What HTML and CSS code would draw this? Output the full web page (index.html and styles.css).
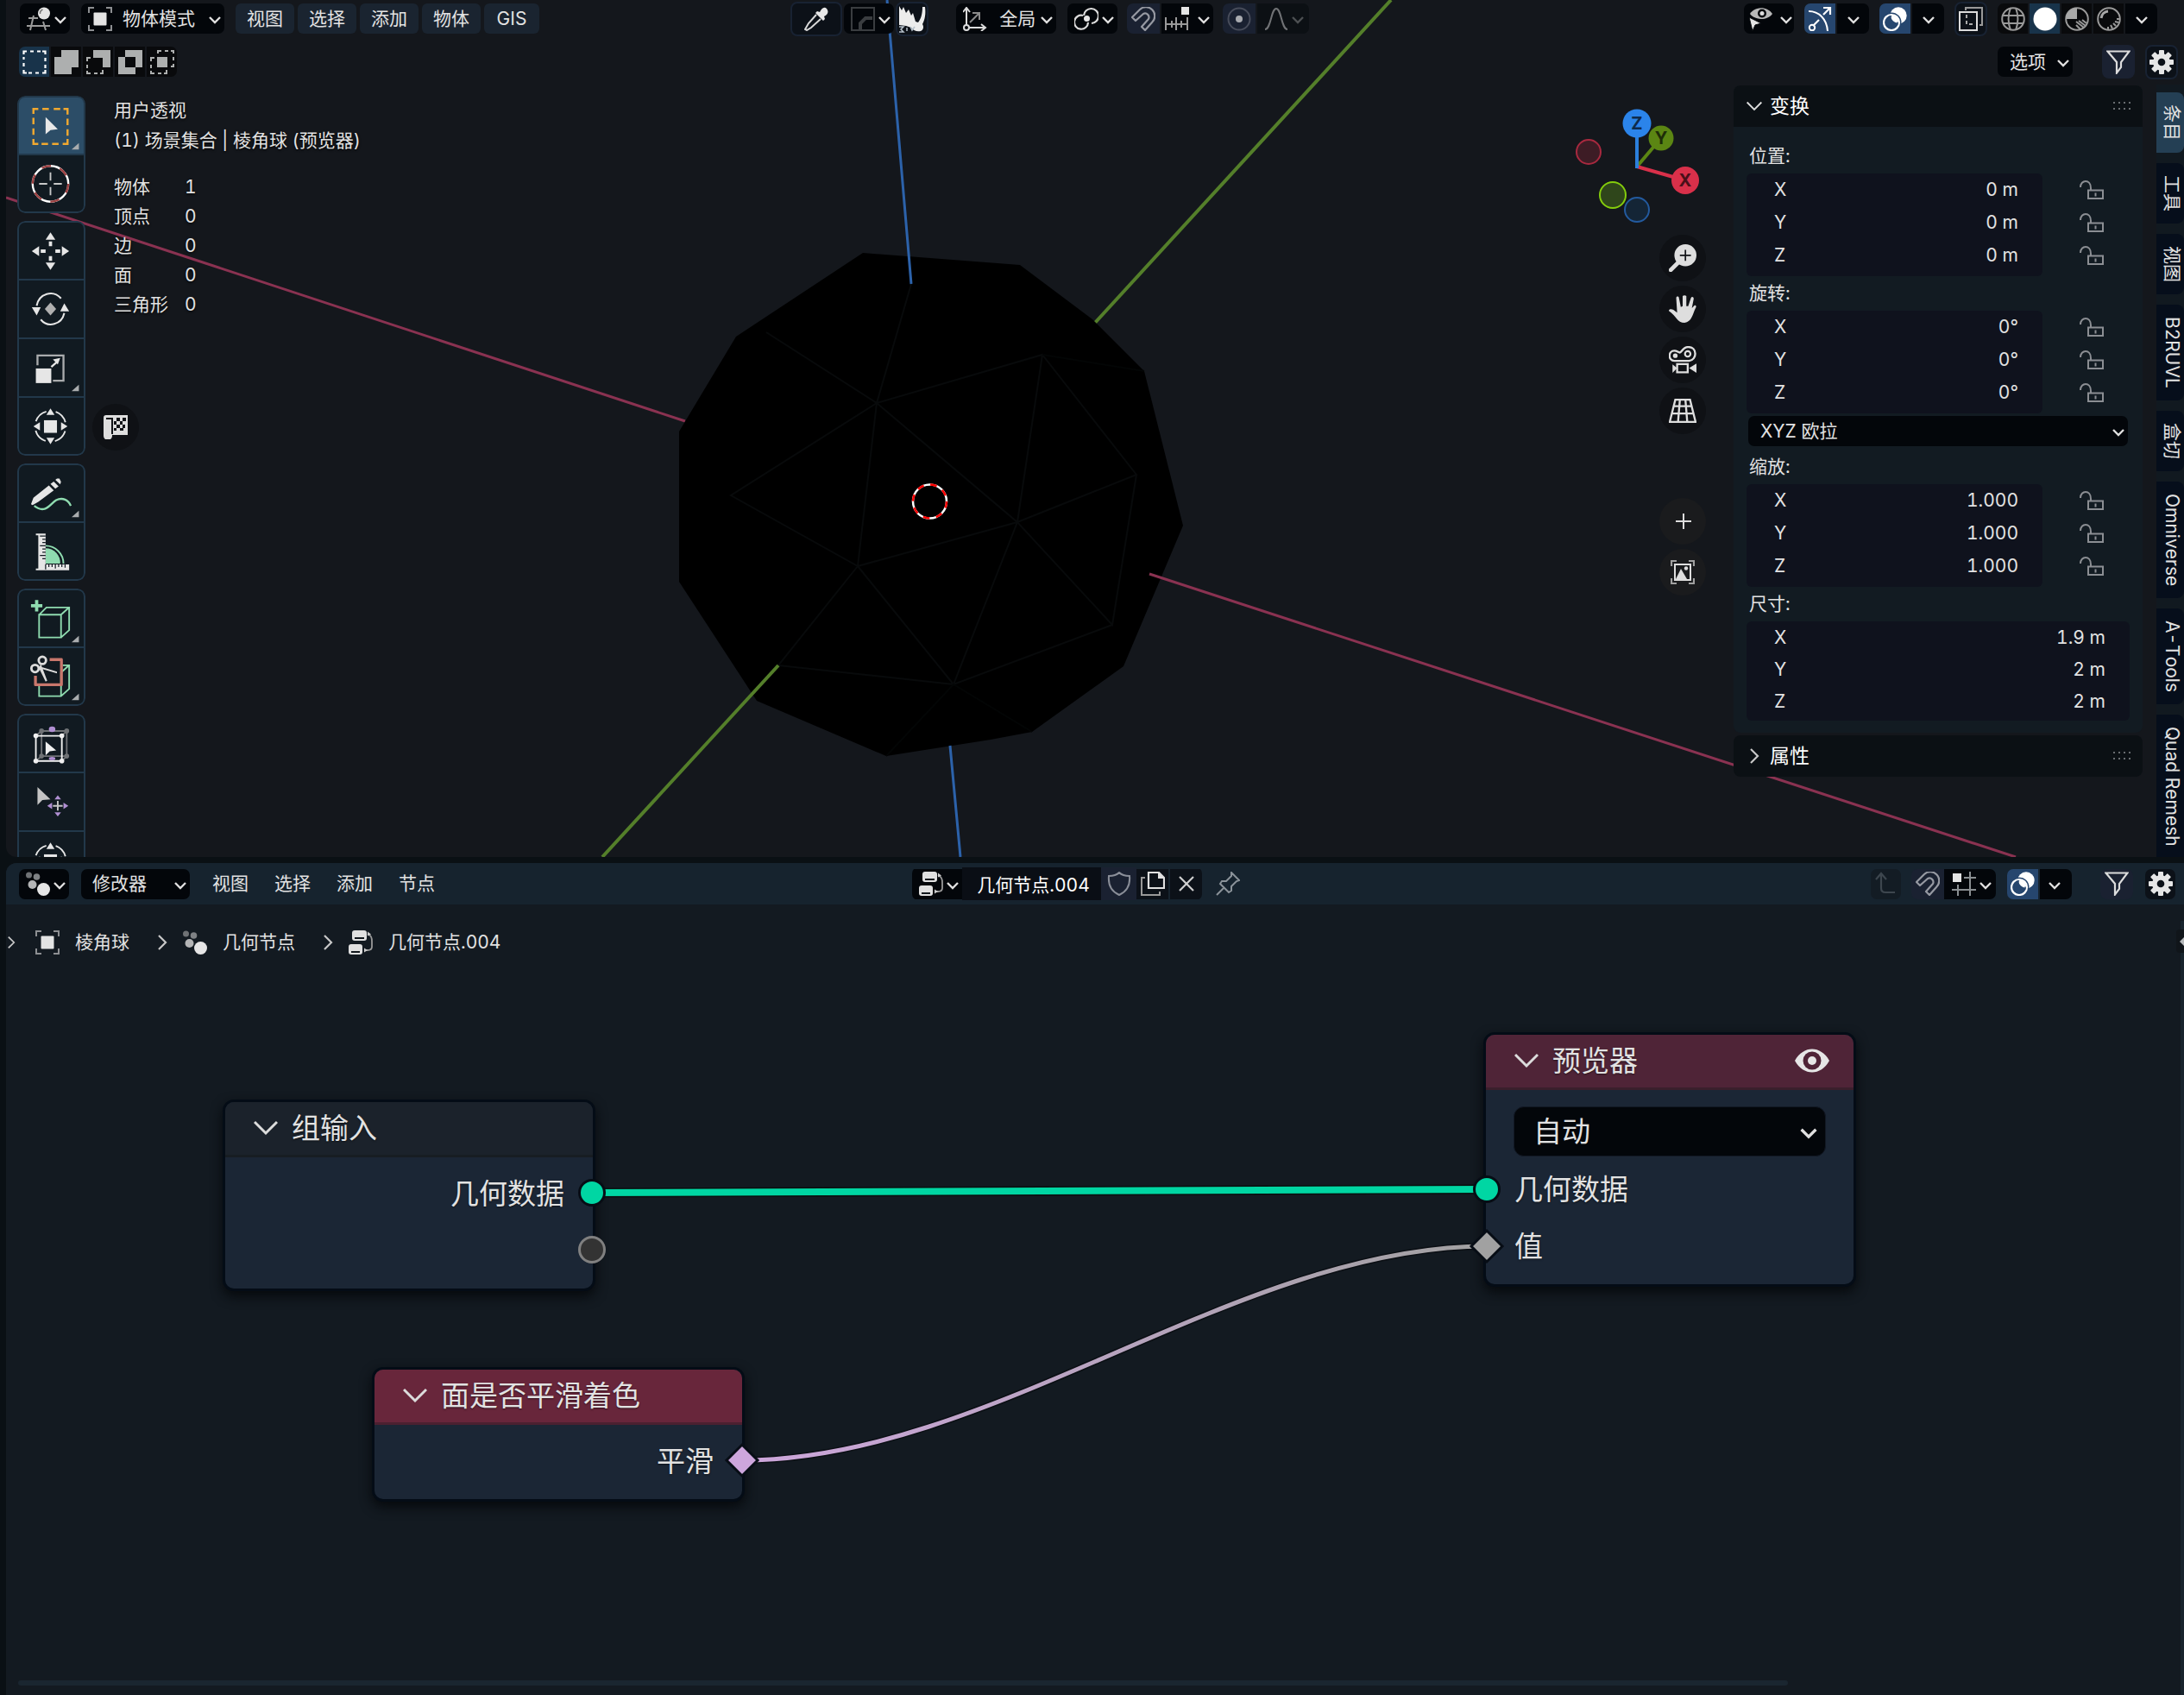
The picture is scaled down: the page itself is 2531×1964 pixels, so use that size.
FILE: index.html
```html
<!DOCTYPE html>
<html lang="zh-CN">
<head>
<meta charset="utf-8">
<meta name="viewport" content="width=device-width, initial-scale=1">
<title>几何节点</title>
<link rel="stylesheet" href="styles.css">
</head>
<body>

<svg class="defs" aria-hidden="true">
  <symbol id="chev" viewBox="0 0 14 10"><path d="M1 2l6 6 6-6" fill="none" stroke="#e0e0e0" stroke-width="2.4"/></symbol>
  <symbol id="chev-thin" viewBox="0 0 28 18"><path d="M1 2l13 13L27 2" fill="none" stroke="#dcdcdc" stroke-width="3"/></symbol>
  <symbol id="chev-right" viewBox="0 0 12 20"><path d="M2 2l8 8-8 8" fill="none" stroke="#c8c8c8" stroke-width="2.2"/></symbol>
  <symbol id="i-view3d" viewBox="0 0 28 28"><g fill="none" stroke="#9a9a9a" stroke-width="2"><path d="M2 13h11M0 22h27M8 10L4 27M19 17l3 10"/></g><circle cx="20" cy="7.500" r="7" fill="#e4e4e4"/><path d="M15.500 8a5 5 0 0 1 3-5" fill="none" stroke="#777" stroke-width="1.500"/></symbol>
  <symbol id="i-object" viewBox="0 0 28 28"><path d="M1 7V1h6M21 1h6v6M27 21v6h-6M7 27H1v-6" fill="none" stroke="#8d8f92" stroke-width="2"/><rect x="6.500" y="6.500" width="15" height="15" rx="1" fill="#e4e4e4"/></symbol>
  <symbol id="i-geonodes" viewBox="0 0 28 28"><circle cx="3.500" cy="4" r="3.500" fill="#6f7275"/><circle cx="12.500" cy="6" r="3.800" fill="#7f8285"/><circle cx="7.500" cy="15" r="5" fill="#b4b5b6"/><circle cx="20.500" cy="20.500" r="7.500" fill="#e6e6e6"/></symbol>
  <symbol id="i-tree" viewBox="0 0 28 28"><rect x="4" y="0" width="17" height="12" rx="3" fill="#e0e0e0"/><rect x="0" y="16" width="16" height="12" rx="3" fill="#e0e0e0"/><path d="M7 9h11M3 25h10" stroke="#11171c" stroke-width="2"/><path d="M22 4c4 2 5 4 5 9v6c0 3-2 4-5 4h-3" fill="none" stroke="#999" stroke-width="1.800"/><path d="M22 1.500v5l4-2zM18 20.500v5l4-2.500z" fill="#ccc"/></symbol>
  <symbol id="i-magnet" viewBox="0 0 28 28"><path d="M1 12L10 3a10 10 0 0 1 14 15l-8 9-4-4 8-9a4.500 4.500 0 0 0-6-6l-9 8z" fill="none" stroke="currentColor" stroke-width="2.200" stroke-linejoin="round"/></symbol>
  <symbol id="i-overlay" viewBox="0 0 28 28"><circle cx="18" cy="10" r="9.700" fill="#fff"/><circle cx="10" cy="18" r="9" fill="none" stroke="#26466e" stroke-width="5"/><circle cx="10" cy="18" r="9" fill="none" stroke="#fff" stroke-width="2.200"/><path d="M10.500 9.500a9 9 0 0 1 8 8A9.700 9.700 0 0 1 9 13z" fill="#fff"/><path d="M8.300 10.500A9.700 9.700 0 0 0 17.500 19.700" fill="none" stroke="#26466e" stroke-width="2"/></symbol>
  <symbol id="i-filter" viewBox="0 0 28 28"><path d="M1.500 1.500h25L17 14v6l-5 6.500V14z" fill="none" stroke="#dcdcdc" stroke-width="2.200"/></symbol>
  <symbol id="i-gear" viewBox="0 0 28 28"><g fill="#e6e6e6"><rect x="11" y="0" width="6" height="28" rx="1"/><rect x="0" y="11" width="28" height="6" rx="1"/><rect x="11" y="0" width="6" height="28" rx="1" transform="rotate(45 14 14)"/><rect x="11" y="0" width="6" height="28" rx="1" transform="rotate(-45 14 14)"/><circle cx="14" cy="14" r="10"/></g><circle cx="14" cy="14" r="4.300" fill="#0c1118"/></symbol>
  <symbol id="i-lock" viewBox="0 0 28 22"><path d="M1 8c0-9 12-10 12 1v3" fill="none" stroke="#8b8e93" stroke-width="2"/><path d="M10 11.500h17V21H10zM18.500 14.500v4" fill="none" stroke="#8b8e93" stroke-width="2"/></symbol>
  <symbol id="i-grip" viewBox="0 0 21 10"><path d="M1 1h2M7 1h2M13 1h2M19 1h2M1 8h2M7 8h2M13 8h2M19 8h2" stroke="#686c70" stroke-width="2"/></symbol>
  <symbol id="t-corner" viewBox="-38 -34 76 68"><path d="M35 21v8h-9z" fill="#a9acae"/></symbol>
  <symbol id="t-transform" viewBox="-38 -34 76 68"><circle r="19" fill="none" stroke="#e6e6e6" stroke-width="2" stroke-dasharray="18 11.850" stroke-dashoffset="-6"/><rect x="-8" y="-7.500" width="16" height="15.500" fill="#e6e6e6"/><path d="M0-22l5 8h-10zM0 22l5-8h-10zM-21 0l8-5v10zM21 0l-8-5v10z" fill="#e6e6e6"/></symbol>
</svg>

<main class="app">

<section class="area viewport" aria-label="3D 视图">
  <svg class="scene" viewBox="7 0 2524 993" preserveAspectRatio="xMidYMin slice" aria-hidden="true">
    <g fill="none" stroke-width="4">
      <path d="M1612 0L1269 374" stroke="#547f2a"/>
      <path d="M7 229L794 488" stroke="#8a3251" stroke-width="3"/>
    </g>
    <path d="M1000 293l182 14 84 63 60 60 45 179-69 163-106 76-48 9-121 19-150-64-90-138V500l66-110z" fill="#000"/>
    <path d="M1056 329L1016 467 1208 411 1179 605 1016 467 994 656 847 574 1016 467 888 385M994 656L1179 605 1317 550 1208 411M994 656L1105 793 1179 605 1289 724 1317 550M1289 724L1105 793 902 771 994 656" fill="none" stroke="#080a0b" stroke-width="2"/>
    <path d="M1027 876L1105 793 1196 848M1208 411L1326 430" fill="none" stroke="#030505" stroke-width="2"/>
    <g fill="none" stroke-width="3">
      <path d="M902 771L698 993" stroke="#547f2a" stroke-width="4"/>
      <path d="M1332 665L2336 993" stroke="#8a3251"/>
      <path d="M1028 0L1056 329M1101 864L1113 993" stroke="#2c62aa"/>
    </g>
    <circle cx="1077.500" cy="581" r="19.500" fill="none" stroke="#fff" stroke-width="2.500"/>
    <circle cx="1077.500" cy="581" r="19.500" fill="none" stroke="#f00" stroke-width="2.500" stroke-dasharray="7.660"/>
  </svg>

  <header class="bar top">
    <button class="drop" aria-label="编辑器类型"><svg class="ic"><use href="#i-view3d"/></svg><svg class="cv"><use href="#chev"/></svg></button>
    <span class="drop mode"><svg class="ic"><use href="#i-object"/></svg><select aria-label="模式"><option>物体模式</option></select><svg class="cv"><use href="#chev"/></svg></span>
    <nav class="menus">
      <button>视图</button><button>选择</button><button>添加</button><button>物体</button><button>GIS</button>
    </nav>
    <span class="gap-a"></span>
    <div class="set tools">
      <button class="ghost wide" aria-label="吸管"><svg class="ic" viewBox="0 0 28 28"><path d="M26 2c3 4 1 7-3 9l1 3-2 2-9-9 2-2 3 1c2-4 5-7 8-4z" fill="#e8e8e8"/><path d="M14 9L5 19l-4 7 2 1 5-3 11-10" fill="none" stroke="#d8d8d8" stroke-width="2"/></svg></button>
      <button class="drop" aria-label="衰减"><svg class="ic" viewBox="0 0 28 28"><rect x="1" y="1" width="26" height="26" fill="none" stroke="#3a3d40" stroke-width="2"/><path d="M11 26v-7l6-6h8" fill="none" stroke="#3a3d40" stroke-width="4"/></svg><svg class="cv"><use href="#chev"/></svg></button>
      <button class="ghost rhino" aria-label="插件"><svg class="rh" viewBox="0 0 32 32"><path d="M1 1l3 5 2-4 3 7 3-4 3 7 2-3 3 10 3 1c3-4 5-9 5-18h3c1 8 0 14-3 20 2 3 1 7-2 8-4 1-8 0-11-4L9 24 1 23z" fill="#ececec"/><path d="M1 25h5l-3 3 3 3H1M10 26v4M14 25l2 4 3-4" stroke="#b5c0ca" stroke-width="1.500" fill="none"/></svg></button>
    </div>
    <span class="drop orient"><svg class="ic" viewBox="0 0 28 28"><path d="M4 22V2M0 6l4-5 4 5M6 24h19M21 20l5 4-5 4" fill="none" stroke="#dcdcdc" stroke-width="2"/><path d="M8 18L18 8M11 7h8v8" fill="none" stroke="#8a8a8a" stroke-width="2"/><circle cx="4" cy="24" r="3" fill="none" stroke="#dcdcdc" stroke-width="2"/></svg><select aria-label="变换坐标系"><option>全局</option></select><svg class="cv"><use href="#chev"/></svg></span>
    <button class="drop" aria-label="轴心点"><svg class="ic" viewBox="0 0 28 28"><path d="M11 10a8.500 8.500 0 1 1 9 9" fill="none" stroke="#dcdcdc" stroke-width="2.200"/><path d="M16 18a8 8 0 1 1-6-8" fill="none" stroke="#dcdcdc" stroke-width="2.200"/><circle cx="14.500" cy="13.500" r="3.500" fill="#e8e8e8"/></svg><svg class="cv"><use href="#chev"/></svg></button>
    <div class="join snap">
      <button class="tog" aria-label="吸附"><svg class="ic"><use href="#i-magnet"/></svg></button>
      <button class="drop" aria-label="吸附选项"><svg class="ic" viewBox="0 0 28 28"><rect x="19" y="0" width="9" height="9" fill="#e4e4e4"/><path d="M1 12v15M26 12v15M1 20h25M8 16v8M13 12v15M19 16v8" fill="none" stroke="#999" stroke-width="2"/></svg><svg class="cv"><use href="#chev"/></svg></button>
    </div>
    <div class="join prop">
      <button class="tog" aria-label="衰减编辑"><svg class="ic" viewBox="0 0 28 28"><circle cx="14" cy="14" r="12.500" fill="none" stroke="#474c5a" stroke-width="2"/><circle cx="14" cy="14" r="4" fill="#a9abb0"/></svg></button>
      <button class="drop dim" aria-label="衰减类型"><svg class="ic" viewBox="0 0 28 28"><path d="M1 26c7 0 7-24 13-24s6 24 13 24" fill="none" stroke="#707275" stroke-width="2"/></svg><svg class="cv"><use href="#chev"/></svg></button>
    </div>
    <span class="gap-b"></span>
    <div class="set right">
      <button class="drop vis" aria-label="可选性"><svg class="ic" viewBox="0 0 28 28"><path d="M1 8C7-1 21-1 27 8 21 16 7 16 1 8z" fill="#b8b8b8"/><circle cx="15" cy="7.500" r="5" fill="#04070b"/><circle cx="15" cy="7.500" r="2.500" fill="#ddd"/><path d="M0 12l14 7-7 2-3 7z" fill="#e4e4e4" stroke="#04070b" stroke-width="1"/></svg><svg class="cv"><use href="#chev"/></svg></button>
      <div class="join">
        <button class="on" aria-label="Gizmo"><svg class="ic" viewBox="0 0 28 28"><path d="M1 5c12 0 21 9 22 23" fill="none" stroke="#fff" stroke-width="2"/><path d="M6 22l7-7M18 9l8-8M18 1h8v8" fill="none" stroke="#fff" stroke-width="2.200"/><circle cx="5" cy="24" r="3.200" fill="none" stroke="#fff" stroke-width="2"/></svg></button>
        <button class="drop solo" aria-label="Gizmo 选项"><svg class="cv"><use href="#chev"/></svg></button>
      </div>
      <div class="join">
        <button class="on" aria-label="叠加层"><svg class="ic"><use href="#i-overlay"/></svg></button>
        <button class="drop solo" aria-label="叠加层选项"><svg class="cv"><use href="#chev"/></svg></button>
      </div>
      <button class="ghost" aria-label="透视模式"><svg class="ic" viewBox="0 0 28 28"><rect x="1" y="6" width="20" height="21" fill="none" stroke="#dcdcdc" stroke-width="2"/><path d="M8 4V1h19v20h-3" fill="none" stroke="#999" stroke-width="2"/><path d="M9 9v11h10" fill="none" stroke="#aaa" stroke-width="2" stroke-dasharray="4 3"/></svg></button>
      <div class="join">
        <button class="sh" aria-label="线框"><svg class="ic" viewBox="0 0 28 28"><g fill="none" stroke="#999" stroke-width="2"><circle cx="14" cy="14" r="12.800"/><path d="M11 1c-3 8-3 18 0 26M17 1c3 8 3 18 0 26M2 10h24M2 19h24"/></g></svg></button>
        <button class="sh sel" aria-label="实体"><svg class="ic" viewBox="0 0 28 28"><circle cx="14" cy="14" r="13.500" fill="#fff"/></svg></button>
        <button class="sh" aria-label="材质预览"><svg class="ic" viewBox="0 0 28 28"><circle cx="14" cy="14" r="12.800" fill="none" stroke="#999" stroke-width="2"/><path d="M14 1v13H1A13 13 0 0 1 14 1z" fill="#a8a8a8"/><path d="M13 17l9 7M16 16l8 6M20 15l5 4M13 21l5 5" stroke="#999" stroke-width="2"/></svg></button>
        <button class="sh" aria-label="渲染"><svg class="ic" viewBox="0 0 28 28"><circle cx="14" cy="14" r="12.800" fill="none" stroke="#999" stroke-width="2"/><path d="M5 13a9 9 0 0 1 8-8" fill="none" stroke="#a8a8a8" stroke-width="3"/><path d="M26 14l-3 0M25 18l-4-1M22 22l-3-3M18 25l-2-4M13 26v-3" stroke="#999" stroke-width="2"/></svg></button>
        <button class="drop solo" aria-label="着色选项"><svg class="cv"><use href="#chev"/></svg></button>
      </div>
    </div>
  </header>

  <div class="bar second">
    <div class="join">
      <button class="sh sel" aria-label="设置选择"><svg class="ic" viewBox="0 0 28 28"><path d="M1.500 5v-3.500h3.500M9 1.500h4M17 1.500h4M23 1.500h3.500v3.500M26.500 9v4M26.500 17v4M26.500 23v3.500h-3.500M19 26.500h-4M11 26.500h-4M5 26.500h-3.500v-3.500M1.500 19v-4M1.500 11v-3" fill="none" stroke="#fff" stroke-width="2.200"/></svg></button>
      <button class="sh" aria-label="扩展选择"><svg class="ic" viewBox="0 0 28 28"><path d="M8 0h20v20h-8v8H0V8h8z" fill="#adafaf"/></svg></button>
      <button class="sh" aria-label="减去选择"><svg class="ic" viewBox="0 0 28 28"><path d="M8 0h20v20h-9V9H8z" fill="#adafaf"/><path d="M5 9H1v4M1 17v4M1 24v3h4M9 27h4M16 27h3v-4" fill="none" stroke="#adafaf" stroke-width="2"/></svg></button>
      <button class="sh" aria-label="反转选择"><svg class="ic" viewBox="0 0 28 28"><path d="M8 0h20v20h-8v8H0V8h8zM8 8v12h12V8z" fill="#adafaf" fill-rule="evenodd"/></svg></button>
      <button class="sh" aria-label="交集选择"><svg class="ic" viewBox="0 0 28 28"><rect x="8" y="8" width="12" height="12" fill="#adafaf"/><path d="M9 4V1h4M17 1h4M24 1h3v3M27 8v4M27 16v3h-3M5 9H1v4M1 17v4M1 24v3h4M9 27h4M16 27h3v-4" fill="none" stroke="#adafaf" stroke-width="2"/></svg></button>
    </div>
    <span class="grow"></span>
    <span class="drop opts"><select aria-label="选项"><option>选项</option></select><svg class="cv"><use href="#chev"/></svg></span>
    <button class="tog filt" aria-label="过滤"><svg class="ic"><use href="#i-filter"/></svg></button>
    <button class="ghost gear" aria-label="设置"><svg class="ic"><use href="#i-gear"/></svg></button>
  </div>

  <div class="work">
    <div class="toolbar">
      <div class="grp">
        <button class="sel" aria-label="框选"><svg viewBox="-38 -34 76 68"><path d="M-21-15v-6h6M-10-21h8M4-21h8M16-21h5v7M21-9v8M21 4v8M21 16v6h-6M10 22h-8M-3 22h-8M-15 22h-6v-6M-21 11v-8M-21-2v-8" fill="none" stroke="#f0a830" stroke-width="2.600"/><path d="M-6-11v21l6-5 9-1z" fill="#e8e8e8"/><use href="#t-corner" x="-38" y="-34" width="76" height="68"/></svg></button>
        <button aria-label="游标"><svg viewBox="-38 -34 76 68"><circle r="22" fill="none" stroke="#fff" stroke-width="2.500"/><circle r="22" fill="none" stroke="#9c3f40" stroke-width="2.500" stroke-dasharray="11.500"/><path d="M-14 0H-4M4 0h10M0-14V-4M0 4v10" stroke="#c8c8c8" stroke-width="2"/></svg></button>
      </div>
      <div class="grp">
        <button aria-label="移动"><svg viewBox="-38 -34 76 68"><path d="M0-23l6 9H-6zM0 23l6-9H-6zM-23 0l9-6V6zM23 0l-9-6V6zM-2-12h4v6h-4zM-2 6h4v6h-4zM-12-2h6v4h-6zM6-2h6v4H6z" fill="#e6e6e6"/></svg></button>
        <button aria-label="旋转"><svg viewBox="-38 -34 76 68"><path d="M-17-4C-14-19 3-24 13-13M17 5C14 19-3 24-12 13" fill="none" stroke="#e6e6e6" stroke-width="2.200"/><path d="M-23-2h11l-5 10zM23 3H12l5-10z" fill="#e6e6e6"/><path d="M0-8l7 8-7 8-7-8z" fill="#b0b0b0"/></svg></button>
        <button aria-label="缩放"><svg viewBox="-38 -34 76 68"><path d="M-16-3v-12h32v31H3" fill="none" stroke="#a9abad" stroke-width="2.500"/><rect x="-18" y="1" width="19" height="18" fill="#e6e6e6"/><path d="M1-1l7-6" stroke="#e6e6e6" stroke-width="2.500"/><path d="M12-12l-9 2 6 6z" fill="#e6e6e6"/><use href="#t-corner" x="-38" y="-34" width="76" height="68"/></svg></button>
        <button aria-label="变换"><svg><use href="#t-transform"/></svg></button>
      </div>
      <div class="grp">
        <button aria-label="标注"><svg viewBox="-38 -34 76 68"><path d="M-20 15c14 11 20-3 27-7 8-4 15 0 18 7" fill="none" stroke="#8fdcb0" stroke-width="2.500"/><path d="M-24 13l3-8L-2-10l6 6-19 14-7 4zM0-12l4-3 6 6-4 3zM6-17l2-1.500 3 0 2 4-1 3z" fill="#e6e6e6"/><use href="#t-corner" x="-38" y="-34" width="76" height="68"/></svg></button>
        <button aria-label="测量"><svg viewBox="-38 -34 76 68"><path d="M-6 15V-4A18 18 0 0 1 12 15z" fill="#8fdcb0"/><path d="M-6-7A22 22 0 0 1 16 15" fill="none" stroke="#8fdcb0" stroke-width="2"/><path d="M-18-22h12V16h29v7h-41v-2h3v-41h-3z" fill="#e6e6e6"/><path d="M-13-19h7M-10-15h4M-10-11h4M-13-7h7M-10-3h4M-10 1h4M-13 5h7M-10 9h4M-6 16v6M-2 16v3M2 16v3M6 16v5M10 16v3M14 16v3M18 16v4" stroke="#111a21" stroke-width="1.300"/></svg></button>
      </div>
      <div class="grp">
        <button aria-label="添加立方体"><svg viewBox="-38 -34 76 68"><path d="M-17-23v14M-24-16h14" stroke="#8fdcb0" stroke-width="4"/><path d="M-14-5h27v28h-27zM-14-5l9-9h28v28l-10 9M13-5l10-9" fill="none" stroke="#8fdcb0" stroke-width="2"/><use href="#t-corner" x="-38" y="-34" width="76" height="68"/></svg></button>
        <button aria-label="切割"><svg viewBox="-38 -34 76 68"><path d="M-14 10v14h27l10-9v-29h-8M13 24V-5l10-9" fill="none" stroke="#8fdcb0" stroke-width="2"/><path d="M-1-21h14.500V10h-32V-1" fill="none" stroke="#c9776c" stroke-width="3.500" stroke-linejoin="round"/><g fill="none" stroke="#dcdcdc" stroke-width="3"><circle cx="-10" cy="-20" r="4.500"/><circle cx="-19" cy="-10" r="4.500"/></g><path d="M-15-13L8-6v2l-17-5zM-12-16l8 21-2 1-8-16z" fill="#dcdcdc"/><use href="#t-corner" x="-38" y="-34" width="76" height="68"/></svg></button>
      </div>
      <div class="grp">
        <button aria-label="笼框"><svg viewBox="-38 -34 76 68"><g fill="none" stroke="#6f7275" stroke-width="2"><path d="M-11-16h31v31h-31zM-18-10l7-6M14-10l6-6M14 21l6-6M-18 21l7-6"/></g><g fill="#6f7275"><circle cx="-11" cy="-16" r="3"/><circle cx="20" cy="-16" r="3"/><circle cx="20" cy="15" r="3"/><circle cx="-11" cy="15" r="3"/></g><path d="M-18-10h32v31h-32z" fill="none" stroke="#f0f0f0" stroke-width="2"/><g fill="#f0f0f0"><circle cx="-18" cy="-10" r="3"/><circle cx="14" cy="-10" r="3"/><circle cx="14" cy="21" r="3"/><circle cx="-18" cy="21" r="3"/><path d="M-6-3v17l5-5 8-1z"/></g><ellipse cx="2" cy="-18" rx="4" ry="3.500" fill="#b08fd2"/><ellipse cx="2" cy="18" rx="4" ry="2" fill="#b08fd2"/></svg></button>
        <button aria-label="选择并移动"><svg viewBox="-38 -34 76 68"><path d="M-16-18V4l6-6 10-1z" fill="#c4c4c4"/><path d="M9-1v12M3 5h12" stroke="#c4c4c4" stroke-width="2"/><path d="M9-8l4 5H5zM9 18l4-5H5zM-4 5l6-4v8zM22 5l-6-4v8z" fill="#b08fd2"/></svg></button>
        <button aria-label="变换笼框"><svg><use href="#t-transform"/></svg></button>
      </div>
    </div>

    <div class="info">
      <p>用户透视</p>
      <p>(1) 场景集合 | 棱角球 (预览器)</p>
      <table>
        <tr><th>物体</th><td>1</td></tr>
        <tr><th>顶点</th><td>0</td></tr>
        <tr><th>边</th><td>0</td></tr>
        <tr><th>面</th><td>0</td></tr>
        <tr><th>三角形</th><td>0</td></tr>
      </table>
    </div>
    <button class="round float" aria-label="纹理"><svg class="ic" viewBox="0 0 28 28"><path d="M0 3a3 3 0 0 1 3-3h25v23H10v1a4 4 0 0 1-10 0z" fill="#dedede"/><path d="M3 4h7v18" fill="none" stroke="#111317" stroke-width="2"/><path d="M15 3h4v4h-4zM22 3h4v4h-4zM12 7h3v4h-3zM19 7h3v4h-3zM15 11h4v4h-4zM22 11h3v4h-3zM12 15h3v3h-3zM19 15h4v3h-4z" fill="#111317"/></svg></button>

    <span class="grow"></span>

    <div class="nav">
      <svg class="gizmo" viewBox="1825 125 152 133" aria-label="坐标轴">
        <path d="M1897 193l28-33" stroke="#5b8613" stroke-width="4"/>
        <circle cx="1841" cy="176" r="14" fill="#3d1c25" stroke="#a8293f" stroke-width="2"/>
        <circle cx="1897" cy="243" r="14" fill="#142536" stroke="#235a9e" stroke-width="2"/>
        <circle cx="1869" cy="226" r="15" fill="#2f461b" stroke="#84cc0c" stroke-width="2"/>
        <circle cx="1925" cy="160" r="14.500" fill="#5b8613"/>
        <path d="M1897 193l56 16" stroke="#d9304a" stroke-width="4"/>
        <path d="M1897 195v-52" stroke="#2b7fdc" stroke-width="4"/>
        <circle cx="1953" cy="209" r="16" fill="#d9304a"/>
        <circle cx="1897" cy="143" r="16.500" fill="#2b84ea"/>
        <g class="ax"><text x="1897" y="150" fill="#0e2b4d">Z</text><text x="1925" y="167" fill="#1e2d08">Y</text><text x="1953" y="216" fill="#4a0f19">X</text></g>
      </svg>
      <button class="round" aria-label="缩放视图"><svg class="ic big" viewBox="0 0 30 30"><circle cx="18" cy="12" r="12" fill="#dedede"/><path d="M12 18L2 28" stroke="#dedede" stroke-width="4.500" stroke-linecap="round"/><path d="M18 6v12M12 12h12" stroke="#111317" stroke-width="1.600"/></svg></button>
      <button class="round" aria-label="平移视图"><svg class="ic big" viewBox="0 0 30 30"><path d="M8 3c0-2 3-2 3 0l2 10 2-1V1c1-1 3-1 4 0v11h2l3-9c1-2 3-1 3 1l-2 10 3-3c2 0 2 2 1 3-3 6-4 15-12 16-8 0-9-8-17-13 0-2 3-2 5-1l4 3z" fill="#dedede"/></svg></button>
      <button class="round" aria-label="相机视图"><svg class="ic big" viewBox="0 0 30 30"><path d="M6 5c3 0 4 2 6 2s3-6 9-6c10 0 10 14 1 15H6C-1 16-1 5 6 5z" fill="none" stroke="#dedede" stroke-width="2.200"/><circle cx="7" cy="10.500" r="2.500" fill="#dedede"/><circle cx="20.500" cy="8.500" r="3" fill="none" stroke="#dedede" stroke-width="2"/><path d="M9 19.500h11.500v9H9z" fill="none" stroke="#dedede" stroke-width="2.200"/><path d="M4 20l5 4-5 5zM30 19v10l-8-5z" fill="#dedede"/></svg></button>
      <button class="round" aria-label="透视/正交"><svg class="ic big" viewBox="0 0 30 30"><path d="M7 3h16l6 24H1zM5 10h20M3 18h24M12 3l-2 24M18 3l2 24" fill="none" stroke="#dedede" stroke-width="2.200"/></svg></button>
      <button class="round pale first" aria-label="添加"><svg class="ic" viewBox="0 0 28 28"><path d="M15 5v18M6 14h18" stroke="#dedede" stroke-width="2"/></svg></button>
      <button class="round pale" aria-label="图像"><svg class="ic" viewBox="0 0 28 28"><path d="M1 7V1h6M21 1h6v6M27 21v6h-6M7 27H1v-6" fill="none" stroke="#a0a0a0" stroke-width="2.200"/><rect x="5" y="5" width="18" height="18" fill="none" stroke="#dedede" stroke-width="2"/><path d="M6 22l6-12 7 12z" fill="#dedede"/><circle cx="18" cy="9.500" r="2.200" fill="#dedede"/></svg></button>
    </div>

    <aside class="panels">
      <section class="panel">
        <button class="phead"><svg class="pc"><use href="#chev-thin"/></svg>变换<svg class="grip"><use href="#i-grip"/></svg></button>
        <div class="pbody">
          <h3>位置:</h3>
          <div class="vec">
            <div class="fields">
              <label>X<input value="0 m"></label>
              <label>Y<input value="0 m"></label>
              <label>Z<input value="0 m"></label>
            </div>
            <div class="locks"><button aria-label="锁定 X"><svg><use href="#i-lock"/></svg></button><button aria-label="锁定 Y"><svg><use href="#i-lock"/></svg></button><button aria-label="锁定 Z"><svg><use href="#i-lock"/></svg></button></div>
          </div>
          <h3>旋转:</h3>
          <div class="vec">
            <div class="fields">
              <label>X<input value="0°"></label>
              <label>Y<input value="0°"></label>
              <label>Z<input value="0°"></label>
            </div>
            <div class="locks"><button aria-label="锁定 X"><svg><use href="#i-lock"/></svg></button><button aria-label="锁定 Y"><svg><use href="#i-lock"/></svg></button><button aria-label="锁定 Z"><svg><use href="#i-lock"/></svg></button></div>
          </div>
          <span class="drop euler"><select aria-label="旋转模式"><option>XYZ 欧拉</option></select><svg class="cv"><use href="#chev"/></svg></span>
          <h3>缩放:</h3>
          <div class="vec">
            <div class="fields">
              <label>X<input value="1.000"></label>
              <label>Y<input value="1.000"></label>
              <label>Z<input value="1.000"></label>
            </div>
            <div class="locks"><button aria-label="锁定 X"><svg><use href="#i-lock"/></svg></button><button aria-label="锁定 Y"><svg><use href="#i-lock"/></svg></button><button aria-label="锁定 Z"><svg><use href="#i-lock"/></svg></button></div>
          </div>
          <h3>尺寸:</h3>
          <div class="vec full">
            <div class="fields">
              <label>X<input value="1.9 m"></label>
              <label>Y<input value="2 m"></label>
              <label>Z<input value="2 m"></label>
            </div>
          </div>
        </div>
      </section>
      <section class="panel">
        <button class="phead shut"><svg class="pc"><use href="#chev-right"/></svg>属性<svg class="grip"><use href="#i-grip"/></svg></button>
      </section>
    </aside>

    <nav class="tabs">
      <button class="sel">条目</button><button>工具</button><button>视图</button><button>B2RUVL</button><button>盒切</button><button>Omniverse</button><button>A-Tools</button><button class="last">Quad Remesh</button>
    </nav>
  </div>
</section>

<section class="area editor" aria-label="几何节点编辑器">
  <header class="bar nhead">
    <button class="drop" aria-label="编辑器类型"><svg class="ic"><use href="#i-geonodes"/></svg><svg class="cv"><use href="#chev"/></svg></button>
    <span class="drop modi"><select aria-label="类型"><option>修改器</option></select><svg class="cv"><use href="#chev"/></svg></span>
    <nav class="menus plain">
      <button>视图</button><button>选择</button><button>添加</button><button>节点</button>
    </nav>
    <span class="gap-c"></span>
    <div class="join data">
      <button class="drop" aria-label="浏览节点树"><svg class="ic"><use href="#i-tree"/></svg><svg class="cv"><use href="#chev"/></svg></button>
      <input class="name" value="几何节点.004" aria-label="名称">
      <button class="tog shield" aria-label="伪用户"><svg class="ic" viewBox="0 0 28 28"><path d="M14 1c3 3 7 4 12 4 1 11-3 18-12 22C5 23 1 16 2 5c5 0 9-1 12-4z" fill="none" stroke="#8a8e98" stroke-width="2"/></svg></button>
      <button class="sq" aria-label="新建"><svg class="ic" viewBox="0 0 28 28"><path d="M9 1h12l6 6v12H9z" fill="none" stroke="#e0e0e0" stroke-width="2.200"/><path d="M20 0v8h8z" fill="#e0e0e0"/><path d="M5 7H1v20h21v-4" fill="none" stroke="#999" stroke-width="2"/></svg></button>
      <button class="sq end" aria-label="取消关联"><svg class="ic" viewBox="0 0 28 28"><path d="M6 6l16 16M22 6L6 22" stroke="#d0d0d0" stroke-width="2.200"/></svg></button>
    </div>
    <button class="bare pin" aria-label="固定"><svg class="ic" viewBox="0 0 28 28"><path d="M1 27l8-8M18 1l9 9-3 1-6 6 0 5-3 2-10-10 2-3h5l6-6z" fill="none" stroke="#8a9299" stroke-width="2"/></svg></button>
    <span class="gap-d"></span>
    <button class="up" aria-label="上级"><svg class="ic" viewBox="0 0 28 28"><path d="M2 9l6-7 6 7M8 3v16q0 5 5 5h11" fill="none" stroke="#3d464e" stroke-width="2.200"/></svg></button>
    <div class="join nsnap">
      <button class="tog" aria-label="吸附"><svg class="ic"><use href="#i-magnet"/></svg></button>
      <button class="drop" aria-label="吸附选项"><svg class="ic" viewBox="0 0 28 28"><rect x="1" y="2" width="10" height="10" fill="#e4e4e4"/><path d="M0 21h28M14 7h14M21 0v28M7 15v13" fill="none" stroke="#8a8f92" stroke-width="2"/></svg><svg class="cv"><use href="#chev"/></svg></button>
    </div>
    <div class="join nover">
      <button class="on" aria-label="叠加层"><svg class="ic"><use href="#i-overlay"/></svg></button>
      <button class="drop solo" aria-label="叠加层选项"><svg class="cv"><use href="#chev"/></svg></button>
    </div>
    <button class="tog nfilt" aria-label="过滤"><svg class="ic"><use href="#i-filter"/></svg></button>
    <button class="sq ngear" aria-label="设置"><svg class="ic"><use href="#i-gear"/></svg></button>
  </header>

  <div class="canvas">
    <nav class="crumbs">
      <svg class="edge"><use href="#chev-right"/></svg>
      <svg class="ic"><use href="#i-object"/></svg><a href="#object">棱角球</a>
      <svg class="sep"><use href="#chev-right"/></svg>
      <svg class="ic"><use href="#i-geonodes"/></svg><a href="#modifier">几何节点</a>
      <svg class="sep"><use href="#chev-right"/></svg>
      <svg class="ic"><use href="#i-tree"/></svg><a href="#tree">几何节点.004</a>
    </nav>
    <span class="side"></span>
    <svg class="flap" viewBox="0 0 9 27" aria-hidden="true"><path d="M9 9L4 14l5 5z" fill="#b5b8ba"/></svg>

    <article class="node n-input">
      <h2><svg><use href="#chev-thin"/></svg>组输入</h2>
      <p class="out">几何数据</p>
      <p class="out"></p>
    </article>
    <article class="node n-smooth">
      <h2 class="red"><svg><use href="#chev-thin"/></svg>面是否平滑着色</h2>
      <p class="out">平滑</p>
    </article>
    <article class="node n-viewer">
      <h2 class="wine"><svg><use href="#chev-thin"/></svg>预览器<svg class="eye" viewBox="0 0 40 28"><path d="M0 14C10-4 30-4 40 14 30 32 10 32 0 14z" fill="#e6e6e6"/><circle cx="20" cy="14" r="10.500" fill="#4f2437"/><circle cx="20" cy="14" r="5" fill="#e6e6e6"/></svg></h2>
      <span class="drop auto"><select aria-label="数据类型"><option>自动</option></select><svg class="cv"><use href="#chev"/></svg></span>
      <p>几何数据</p>
      <p>值</p>
    </article>

    <svg class="links" width="2524" height="916" viewBox="7 1048 2524 916" aria-hidden="true">
      <defs><linearGradient id="lk" gradientUnits="userSpaceOnUse" x1="860" y1="0" x2="1723" y2="0"><stop offset="0" stop-color="#cda6dc"/><stop offset="1" stop-color="#a1a1a1"/></linearGradient></defs>
      <path d="M686 1382L1723 1378" stroke="#08100f" stroke-width="11"/>
      <path d="M686 1382L1723 1378" stroke="#00d6a3" stroke-width="8"/>
      <path d="M860 1692C1148 1692 1435 1444 1723 1444" fill="none" stroke="#0b0f14" stroke-width="8"/>
      <path d="M860 1692C1148 1692 1435 1444 1723 1444" fill="none" stroke="url(#lk)" stroke-width="5"/>
      <g stroke="#070d15" stroke-width="3">
        <circle cx="686" cy="1382" r="14.500" fill="#00d6a3"/>
        <circle cx="1723" cy="1378" r="14.500" fill="#00d6a3"/>
        <path d="M860 1674l18 18-18 18-18-18z" fill="#cda6dc"/>
        <path d="M1723 1426l18 18-18 18-18-18z" fill="#a1a1a1"/>
      </g>
      <circle cx="686" cy="1448" r="14.500" fill="#333" stroke="#808080" stroke-width="3"/>
    </svg>
    <span class="hscroll"></span>
  </div>
</section>

</main>
</body>
</html>
```
FILE: styles.css
```css
* { box-sizing: border-box; }

body {
  margin: 0;
  background: #0a1014;
  color: #e2e2e2;
  font: 21px/34px Inter, "Noto Sans CJK SC", sans-serif;
  font-variant-numeric: tabular-nums;
  font-kerning: none;
  overflow: hidden;
}

button, select, input {
  font: inherit;
  font-variant-numeric: tabular-nums;
  font-kerning: none;
  color: inherit;
  margin: 0;
  padding: 0;
  border: 0;
  background: none;
}

select { appearance: none; flex: 1; min-width: 0; }
svg { display: block; flex: none; }
.defs { position: absolute; width: 0; height: 0; }

.app {
  height: 100vh;
  display: grid;
  grid-template-rows: 993fr 964fr;
  gap: 7px;
  padding-left: 7px;
}

.area { position: relative; overflow: hidden; min-height: 0; display: flex; flex-direction: column; }
.viewport { background: #14171c; border-radius: 0 0 0 12px; }
.scene { position: absolute; left: 0; top: 0; width: 100%; height: 100%; }
.bar, .work { position: relative; }

/* shared controls */
.ic { width: 28px; height: 28px; }
.big { width: 32px; height: 32px; }
.cv { width: 14px; height: 10px; pointer-events: none; margin-top: 3px; }
.grow { flex: 1; }

.bar { display: flex; align-items: center; }
.bar button, .drop { height: 35px; display: flex; align-items: center; justify-content: center; }
.drop { background: #03060a; border-radius: 7px; gap: 4px; padding: 0 4px 0 8px; width: 58px; }
.bar .drop { flex: none; }
.set { display: flex; align-items: center; }
.join { display: flex; gap: 2px; align-items: center; border-radius: 7px; overflow: hidden; flex: none; }
.join .drop { border-radius: 0; }
.join > * { flex: none; }
.tog { width: 38px; background: #1a2131; color: #9699a2; }
.on { width: 36px; background: #26466e; }
.drop.solo { width: 37px; padding: 0; }
.sh { width: 35px; background: #090a0c; }
.sh.sel { background: #18334a; }
.ghost { width: 38px; background: #0c1118; border: 2px solid #182232; border-radius: 8px; }
.bar .ghost { height: 40px; }

/* viewport header */
.top { height: 43px; padding: 0 31px 0 16px; }
.mode { width: 166px; margin-left: 13px; padding-right: 4px; }
.mode select { margin-left: 8px; }
.menus { display: flex; gap: 4px; margin-left: 13px; }
.menus button { background: #1a2430; border-radius: 6px; padding: 0 13px; min-width: 64px; }
.gap-a { flex: 293; }
.gap-b { flex: 507; }
.tools { gap: 2px; }
.bar .wide { width: 60px; }
.rhino { overflow: hidden; }
.rh { width: 32px; height: 32px; }
.orient { width: 116px; margin: 0 13px 0 32px; }
.orient select { margin-left: 10px; }
.snap { margin: 0 11px; }
.snap .drop, .prop .drop { width: 60px; padding-left: 6px; }
.bar .snap .drop { gap: 10px; justify-content: flex-start; padding-left: 4px; }
.drop.dim { background: #0c1014; }
.dim .cv { opacity: .3; }
.right { gap: 12px; }
.vis { gap: 8px; }

.second { height: 35px; margin-top: 11px; padding: 0 7px 0 15px; }
.opts { width: 87px; padding-left: 14px; margin-right: 34px; }
.second .filt { border-radius: 8px; height: 39px; }
.second .gear { margin-left: 12px; }

/* main row of the viewport */
.work { flex: 1; min-height: 0; display: flex; align-items: flex-start; margin-top: 9px; }
.toolbar { width: 79px; margin: 13px 0 0 13px; display: flex; flex-direction: column; gap: 9px; flex: none; }
.grp { border-radius: 9px; overflow: hidden; }
.grp button { display: block; width: 100%; height: 68px; background: #111a21; border: 2px solid #22384a; border-bottom-width: 0; }
.grp button:first-child { height: 67px; border-radius: 9px 9px 0 0; }
.grp button:last-child { height: 69px; border-bottom-width: 2px; border-radius: 0 0 9px 9px; }
.grp .sel { background: #2c4d67; }
.grp svg { width: 73px; height: 64px; }

.info { margin: 12px 0 0 33px; text-shadow: 0 1px 3px #000; }
.info p { margin: 0; line-height: 35px; white-space: nowrap; }
.info table { border-spacing: 0; margin-top: 20px; }
.info th { font-weight: 400; text-align: left; padding: 0; width: 82px; }
.info td { padding: 0; }

.round { width: 54px; height: 54px; border-radius: 50%; background: #0f1115; display: grid; place-items: center; }
.pale { background: #1a1b1d; }
.first { margin-top: 69px; }
.float { position: absolute; left: 100px; top: 370px; }

.nav { width: 152px; margin-right: 32px; padding-top: 27px; display: flex; flex-direction: column; align-items: flex-end; gap: 5px; flex: none; }
.gizmo { width: 152px; height: 133px; margin-bottom: 9px; }
.ax { font-size: 20px; font-weight: 700; text-anchor: middle; }

/* sidebar panels */
.panels { width: 474px; margin-right: 16px; padding-top: 1px; display: flex; flex-direction: column; gap: 3px; flex: none; }
.panel { background: #121b22; border-radius: 8px; overflow: hidden; }
.phead { width: 100%; height: 48px; background: #0b1014; display: flex; align-items: center; gap: 9px; padding: 0 14px 0 15px; font-size: 23px; color: #fff; }
.pc { width: 18px; height: 12px; }
.shut .pc { height: 20px; }
.grip { width: 21px; height: 10px; margin-left: auto; }
.pbody { padding: 14px 15px; }
.pbody h3 { margin: 0; padding-left: 3px; font-size: 21px; font-weight: 400; line-height: 40px; }
.vec { display: flex; }
.fields { width: 343px; background: #0f121d; border-radius: 6px; padding-bottom: 5px; }
.full .fields { width: 100%; padding-bottom: 4px; }
.fields label { display: flex; align-items: center; height: 38px; padding: 0 28px 0 32px; }
.fields input { flex: 1; min-width: 0; text-align: right; }
.full label { height: 37px; }
.locks { margin-left: 43px; }
.locks button { display: grid; place-items: center; height: 38px; }
.locks svg { width: 28px; height: 22px; }
.euler { width: auto; margin: 3px 2px 4px; padding: 0 4px 0 14px; }

.tabs { width: 32px; align-self: stretch; background: #111920; padding-top: 9px; display: flex; flex-direction: column; gap: 12px; flex: none; }
.tabs button { writing-mode: vertical-rl; text-orientation: sideways; width: 32px; line-height: 28px; padding: 14px 0 14px 4px; background: #060e1b; border-radius: 0 8px 8px 0; flex: none; text-align: left; }
.tabs .sel { background: #243f54; }
.tabs .last { flex: 1 0 auto; border-radius: 0 8px 0 0; }

/* node editor */
.editor { background: #131a21; border-radius: 12px 0 0 0; }
.nhead { height: 48px; flex: none; background: #16232e; padding: 0 10px 0 15px; }
.modi { width: 126px; margin-left: 14px; padding: 0 4px 0 13px; }
.plain { margin-left: 13px; }
.menus.plain button { background: none; width: 68px; }
.gap-c { flex: 542; }
.gap-d { flex: 733; }
.data { gap: 0; }
.name { width: 161px; height: 38px; background: #0a0e15; color: #fff; padding-left: 17px; }
.bar .shield { width: 41px; height: 38px; }
.sq { width: 37px; background: #0c1118; border-radius: 0; }
.pin { margin-left: 16px; }
.sq.end { margin-left: 2px; }
.bar .up { width: 35px; background: #131c24; border-radius: 7px; margin-right: 12px; }
.nsnap .drop { width: 60px; padding-left: 7px; }
.nsnap { gap: 0; }
.nover { margin: 0 33px 0 13px; }
.bar .nover .solo { padding-right: 4px; }
.nhead .nfilt { border-radius: 8px; }
.nhead .ngear { width: 35px; border-radius: 7px; margin-left: 14px; }

.canvas { position: relative; flex: 1; min-height: 0; overflow: hidden; }
.crumbs { display: flex; align-items: center; height: 34px; margin-top: 27px; }
.crumbs a { color: inherit; text-decoration: none; margin-left: 18px; white-space: nowrap; }
.edge { width: 12px; height: 16px; margin-right: 22px; }
.sep { width: 12px; height: 20px; margin: 0 18px 0 32px; }
.side { position: absolute; right: 0; top: 19px; bottom: 0; width: 4px; background: #18242d; }
.flap { position: absolute; right: 0; top: 29px; width: 9px; height: 27px; background: #10151a; border-radius: 4px 0 0 4px; }
.links { position: absolute; left: 0; top: 0; }
.hscroll { position: absolute; left: 14px; bottom: 11px; width: 2051px; height: 6px; border-radius: 3px; background: #1a2630; }

.node { position: absolute; width: 432px; border: 3px solid #040c16; border-radius: 13px; background: #1b2635; font-size: 33px; box-shadow: 0 6px 14px #06090c; overflow: hidden; text-shadow: 0 1px 2px #0008; }
.node h2 { margin: 0; height: 64px; font-size: 33px; font-weight: 400; display: flex; align-items: center; padding: 0 28px 1px 33px; gap: 16px; background: #1b222b; border-bottom: 3px solid #171d22; }
.node h2 svg { width: 28px; height: 18px; }
.node .red { background: #68263b; border-color: #4b2030; }
.node .wine { background: #4f2437; border-color: #3a1f2c; }
.node h2 .eye { width: 40px; height: 28px; margin-left: auto; }
.node p { margin: 0; height: 66px; line-height: 66px; padding: 0 33px; }
.node .out { text-align: right; }
.n-input { left: 251px; top: 226px; height: 222px; padding-top: 0; }
.n-input h2 + p, .n-smooth h2 + p { margin-top: 9px; }
.n-smooth { left: 424px; top: 536px; height: 156px; }
.n-viewer { left: 1712px; top: 148px; height: 295px; }
.auto { width: 362px; height: 58px; margin: 19px auto 5px; padding: 0 9px 0 22px; border: 1px solid #121824; border-radius: 12px; }
.auto .cv { width: 20px; height: 14px; }
```
